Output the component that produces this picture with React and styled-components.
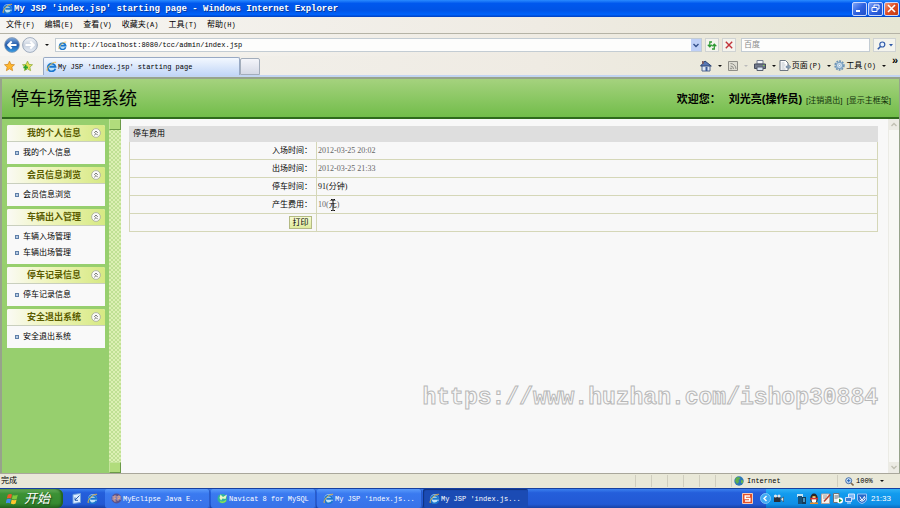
import styled, { createGlobalStyle, css } from 'styled-components';

const GlobalStyle = createGlobalStyle`
  *, *::before {
    box-sizing: border-box;
  }
  body {
    margin: 0;
    background: #ece9d8;
    color: #000;
    font-family: "Liberation Sans", "Noto Sans CJK SC", sans-serif;
    font-size: 8px;
    line-height: 12px;
  }
  button, input {
    font: inherit;
    color: inherit;
    margin: 0;
    padding: 0;
    border: 0;
    background: none;
  }
  svg {
    display: block;
    flex: none;
  }
`;

const mono = css`
  font-family: "Liberation Mono", "Noto Sans CJK SC", monospace;
  font-size: 7px;
`;

const Window = styled.div`
  display: flex;
  flex-direction: column;
  min-height: 100vh;
`;

/* ---- browser chrome ---- */

const TitleBar = styled.header`
  display: flex;
  align-items: center;
  gap: 1px;
  height: 17px;
  padding: 0 1px 0 2px;
  background: linear-gradient(#2a8bff, #0058ee 20%, #0054e6 60%, #0062fa 85%, #0040c0);
`;

const WindowTitle = styled.h1`
  flex: 1;
  margin: 0;
  color: #fff;
  font-family: "Liberation Mono", monospace;
  font-size: 9px;
  font-weight: bold;
  line-height: 16px;
  text-shadow: 1px 1px 0 #0a3a9c;
`;

const WindowButton = styled.button`
  display: flex;
  align-items: center;
  justify-content: center;
  width: 15px;
  height: 14px;
  border: 1px solid #c8d8ff;
  border-radius: 2px;
  background: ${(p) => (p.$close
    ? 'linear-gradient(135deg, #f09a7c, #dd4a22 50%, #c03a14)'
    : 'linear-gradient(135deg, #7fa5f8, #2f62e0 50%, #1f4fc8)')};
`;

const MenuBar = styled.nav`
  display: flex;
  align-items: center;
  gap: 10px;
  height: 17px;
  padding: 0 6px;
  background: linear-gradient(90deg, #f6f5f2, #efebe3 60%, #e6e6d4);
  border-bottom: 1px solid #b5b3a6;
`;

const MenuItem = styled.button`
  display: flex;
  white-space: nowrap;
`;

const HotKey = styled.span`
  ${mono}
`;

const AddressRow = styled.div`
  display: flex;
  align-items: center;
  gap: 3px;
  height: 22px;
  padding: 0 4px;
  background: linear-gradient(90deg, #f6f5f2, #efebe3 60%, #e6e6d4);
`;

const NavButtons = styled.div`
  display: flex;
  align-items: center;
  gap: 2px;
  width: 48px;
`;

const Field = styled.div`
  display: flex;
  align-items: center;
  gap: 3px;
  height: 14px;
  border: 1px solid #c3ccd3;
  background: #fdfdfc;
  ${(p) => (p.$grow ? 'flex: 1; padding-left: 2px;' : 'width: 129px; padding-left: 2px; margin-left: 2px;')}
`;

const FieldInput = styled.input`
  flex: 1;
  min-width: 0;
  height: 12px;
  outline: 0;
  ${(p) => p.$mono && mono}
  &::placeholder {
    color: #8c8c8c;
    opacity: 1;
  }
`;

const DropButton = styled.button`
  display: flex;
  align-items: center;
  justify-content: center;
  width: 10px;
  height: 12px;
  background: #bfd0f7;
`;

const SquareButton = styled.button`
  display: flex;
  align-items: center;
  justify-content: center;
  gap: 3px;
  width: ${(p) => (p.$wide ? '23px' : '14px')};
  height: 14px;
  border: 1px solid #cfd3d3;
  background: #f4f4ee;
`;

const TabRow = styled.div`
  display: flex;
  align-items: flex-end;
  height: 21px;
  background: linear-gradient(90deg, #f3f2ee, #efebe3 60%, #e6e6d4);
  border-bottom: 2px solid #c3d5f2;
`;

const Favorites = styled.div`
  display: flex;
  align-items: center;
  gap: 7px;
  width: 43px;
  height: 19px;
  padding-left: 4px;
`;

const PageTab = styled.button`
  display: flex;
  align-items: center;
  gap: 1px;
  width: 197px;
  height: 18px;
  padding-left: 2px;
  border: 1px solid #98a9c4;
  border-bottom: 0;
  border-radius: 2px 2px 0 0;
  background: linear-gradient(#f3f8ff, #c3d7f7);
  white-space: nowrap;
  ${mono}
`;

const NewTab = styled.button`
  width: 20px;
  height: 17px;
  border: 1px solid #a3adbb;
  border-radius: 2px 2px 0 0;
  background: linear-gradient(#f4f5fa, #d5d9e6);
`;

const CommandBar = styled.div`
  display: flex;
  align-items: center;
  height: 19px;
  margin-left: auto;
  padding-right: 2px;
`;

const Command = styled.button`
  display: flex;
  align-items: center;
  gap: 1px;
  margin-right: ${(p) => (p.$tight ? '3px' : '6px')};
  white-space: nowrap;
`;

const Arrow = styled.span`
  width: 0;
  height: 0;
  margin-left: 5px;
  border: 2px solid transparent;
  border-top-color: ${(p) => (p.$dim ? '#bbb' : '#111')};
  border-bottom: 0;
`;

const More = styled.button`
  align-self: flex-start;
  font-size: 11px;
  font-weight: bold;
  line-height: 8px;
`;

/* ---- page ---- */

const Page = styled.div`
  display: flex;
  flex: 1;
  flex-direction: column;
  border: solid #97a38b;
  border-width: 2px 1px 0 2px;
`;

const Banner = styled.header`
  display: flex;
  align-items: center;
  justify-content: space-between;
  height: 40px;
  padding: 2px 8px 0 9px;
  background: linear-gradient(#a5d27e, #72bd4a);
  border-bottom: 2px solid #2f6a1c;
`;

const SystemName = styled.h2`
  margin: 0;
  font-size: 18px;
  font-weight: normal;
  line-height: 24px;
`;

const Welcome = styled.div`
  display: flex;
  align-items: baseline;
  gap: 4px;
`;

const Greeting = styled.strong`
  margin-right: ${(p) => (p.$gap ? '4px' : '0')};
  font-size: 11px;
  line-height: 16px;
`;

const BannerLink = styled.a`
  color: #10300a;
  text-decoration: none;
`;

const Content = styled.div`
  display: flex;
  flex: 1;
`;

const Sidebar = styled.aside`
  display: flex;
  flex-direction: column;
  gap: 3px;
  width: 107px;
  padding: 6px 4px 5px 5px;
  background: #97cf6e;
`;

const Panel = styled.section`
  background: #f9f9f9;
  border-radius: 2px 2px 0 0;
  overflow: hidden;
`;

const PanelHead = styled.button`
  display: grid;
  grid-template-columns: 1fr 14px;
  align-items: center;
  width: 100%;
  height: 17px;
  padding-left: 20px;
  border-bottom: 1px solid #c9cfbe;
  background: linear-gradient(90deg, #fafaf5, #eef4b8 45%, #d6e983);
  color: #5a5c00;
  font-size: 9px;
  font-weight: bold;
  text-align: left;
`;

const PanelList = styled.ul`
  margin: 0;
  padding: 3px 0;
  list-style: none;
`;

const PanelItem = styled.li`
  display: flex;
  align-items: center;
  gap: 4px;
  height: 16px;
  padding-left: 8px;
  &::before {
    content: "";
    width: 4px;
    height: 4px;
    border: 1px solid #5f7fa8;
    background: #b9cce4;
  }
  a {
    color: #000;
    text-decoration: none;
  }
`;

const Splitter = styled.div`
  display: flex;
  flex-direction: column;
  justify-content: space-between;
  width: 12px;
  background: repeating-conic-gradient(#bfe094 0 25%, #dcf0b4 0 50%) 0 0 / 4px 4px;
`;

const SplitterKnob = styled.button`
  width: 12px;
  height: 11px;
  border: 1px solid;
  border-color: #c4e49a #6b9a48 #6b9a48 #c4e49a;
  background: #b1dc7c;
`;

const Main = styled.main`
  position: relative;
  flex: 1;
  padding: 7px 10px 0 8px;
  background: #f8f8f8;
`;

const FeeTable = styled.table`
  width: 100%;
  border-collapse: collapse;
  table-layout: fixed;
  line-height: 12px;

  th, td {
    height: 18px;
    padding: 0 1px;
    border: 1px solid #d5d7b8;
    text-align: left;
    font-weight: normal;
  }
  thead th {
    height: 15px;
    padding-left: 3px;
    background: #dedede;
    border-color: #dedede;
  }
  tbody th {
    padding-right: 4px;
    text-align: right;
  }
`;

const LabelCol = styled.col`
  width: 25%;
`;

const Value = styled.span`
  color: ${(p) => (p.$dark ? '#111' : '#666')};
  font-family: "Liberation Serif", "Noto Sans CJK SC", serif;
`;

const PrintButton = styled.button`
  width: 23px;
  height: 13px;
  border: 1px solid #b4ba84;
  background: linear-gradient(#f6fbd2, #dfeb9d);
  line-height: 11px;
  vertical-align: middle;
`;

const Unit = styled.span`
  position: relative;
  color: #111;
`;

const Caret = styled.svg`
  position: absolute;
  top: -1px;
  left: 1px;
`;

const Watermark = styled.div`
  position: absolute;
  right: 10px;
  bottom: 61px;
  color: #f8f8f8;
  font-family: "Liberation Mono", monospace;
  font-size: 23px;
  font-weight: bold;
  line-height: 28px;
  -webkit-text-stroke: 1px #b8b8b8;
`;

const ScrollTrack = styled.div`
  display: flex;
  flex-direction: column;
  justify-content: space-between;
  width: 11px;
  border-left: 1px solid #ebebe5;
  background: #f8f8f5;
`;

const ScrollButton = styled.button`
  display: flex;
  align-items: center;
  justify-content: center;
  width: 10px;
  height: 11px;
  background: #ecebe4;
`;

/* ---- status bar and taskbar ---- */

const StatusBar = styled.footer`
  display: flex;
  align-items: center;
  height: 15px;
  border-top: 1px solid #a9a79b;
  background: #e9e8d8;
`;

const StatusText = styled.span`
  flex: 1;
  padding-left: 1px;
`;

const StatusCell = styled.span`
  display: flex;
  align-items: center;
  gap: 3px;
  width: ${(p) => p.$width};
  height: 12px;
  padding-left: ${(p) => (p.$padded ? '2px' : '0')};
  border-left: 1px solid #d0cebf;
  ${mono}
`;

const ZoomButton = styled.button`
  display: flex;
  align-items: center;
  gap: 2px;
  padding-left: 5px;
  ${mono}
`;

const TaskBar = styled.footer`
  display: flex;
  align-items: stretch;
  height: 20px;
  border-top: 1px solid #1740a0;
  background: linear-gradient(#3a80ee, #245edb 20%, #2259d4 80%, #1941a5);
`;

const StartButton = styled.button`
  display: flex;
  align-items: center;
  gap: 5px;
  width: 63px;
  padding-left: 6px;
  border-radius: 0 6px 6px 0;
  background: linear-gradient(#67ad5c, #3c9135 25%, #358a30 75%, #23641f);
  box-shadow: inset -2px 0 2px #22601e;
  color: #fff;
  font-size: 13px;
  font-style: italic;
  text-shadow: 1px 1px 1px #1c4a18;
`;

const QuickLaunch = styled.div`
  display: flex;
  align-items: center;
  gap: 5px;
  width: 42px;
  padding-left: 9px;
`;

const Tasks = styled.div`
  display: flex;
  flex: 1;
  gap: 1px;
`;

const TaskButton = styled.button`
  display: flex;
  align-items: center;
  gap: 1px;
  width: 105px;
  padding-left: 6px;
  border-radius: 2px;
  background: ${(p) => (p.$active ? '#1b4bb4' : 'linear-gradient(#5a9bfa, #3a7af0 25%, #3872e8)')};
  box-shadow: ${(p) => (p.$active ? 'inset 1px 1px 1px #10327e' : 'inset -1px 0 0 #2a5cc8')};
  color: #fff;
  white-space: nowrap;
  ${mono}
`;

const InputMethod = styled.div`
  display: flex;
  align-items: center;
  width: 24px;
`;

const Tray = styled.div`
  display: flex;
  align-items: center;
  gap: 2px;
  width: 134px;
  background: linear-gradient(#2fb0f5, #129bee 25%, #0f8fe6 80%, #0c6cc0);
  color: #fff;
`;

const HideIcons = styled.button`
  margin-left: -6px;
`;

const TrayGroup = styled.div`
  display: flex;
  gap: 2px;
  margin-left: 11px;
`;

const Clock = styled.time`
  margin-left: auto;
  padding-right: 9px;
`;

/* ---- icons ---- */

function IeIcon({ size = 11 }) {
  return (
    <svg width={size} height={size} viewBox="0 0 12 12" fill="none">
      <circle cx="6" cy="6.4" r="5" fill="#bfe2f8" />
      <path d="M10.2 8.4A4.2 4.2 0 1 1 10.3 6.3H3.6" stroke="#1c78cf" strokeWidth="2" />
      <path d="M1.4 11C-.2 8.3 6 .8 11 1.4" stroke="#f0b73c" strokeWidth="1" />
    </svg>
  );
}

function NavCircle({ forward }) {
  const id = forward ? 'fwd' : 'back';
  return (
    <svg width="16" height="16" viewBox="0 0 16 16">
      <defs>
        <linearGradient id={id} x1="0" y1="0" x2="0" y2="1">
          <stop offset="0" stopColor={forward ? '#f6f8fb' : '#7fa9dc'} />
          <stop offset=".5" stopColor={forward ? '#c9d2df' : '#1f57a8'} />
          <stop offset="1" stopColor={forward ? '#e8eef6' : '#3aa0e8'} />
        </linearGradient>
      </defs>
      <circle cx="8" cy="8" r="7.4" fill={`url(#${id})`} stroke="#8c9bb0" strokeWidth=".8" />
      <path
        d={forward ? 'M3.5 8h8M8.3 4.5 11.8 8l-3.5 3.5' : 'M12.5 8h-8M7.7 4.5 4.2 8l3.5 3.5'}
        fill="none"
        stroke="#fff"
        strokeWidth="2"
      />
    </svg>
  );
}

function StarIcon({ add }) {
  return (
    <svg width="11" height="12" viewBox="0 0 12 12">
      <path
        d="M6 .6 7.6 4.2l3.9.4-2.9 2.6.8 3.9L6 9.1l-3.4 2 .8-3.9L.5 4.6l3.9-.4z"
        fill={add ? '#e6dc55' : '#ffb62b'}
        stroke={add ? '#7fa62c' : '#c97f18'}
        strokeWidth=".7"
      />
      {add && <path d="M4 5v5M1.5 7.5h5" stroke="#29a32b" strokeWidth="1.8" />}
    </svg>
  );
}

function HomeIcon() {
  return (
    <svg width="12" height="12" viewBox="0 0 12 12">
      <path d="M2 5.5h8V11H2z" fill="#dfe8f6" stroke="#50648c" />
      <path d="M.5 6 5 1l6.3 5z" fill="#5977b5" stroke="#2c4474" />
      <path d="M2 1h1.8v3H2z" fill="#7c5b62" />
      <path d="M5.5 7h2v4h-2z" fill="#3c5c9a" />
    </svg>
  );
}

function FeedIcon() {
  return (
    <svg width="10" height="10" viewBox="0 0 10 10" fill="none" stroke="#8f8f88">
      <path d="M.5.5h9v9h-9z" fill="#deddd3" />
      <path d="M2.5 5a3 3 0 0 1 3 3M2.5 2.5A5.5 5.5 0 0 1 8 8" />
      <circle cx="3" cy="7.5" r=".6" />
    </svg>
  );
}

function PrinterIcon() {
  return (
    <svg width="12" height="11" viewBox="0 0 12 11">
      <path d="M3 .5h6V4H3z" fill="#f5f7fb" stroke="#7a8292" />
      <path d="M.5 4h11v4.5H.5z" fill="#70798c" stroke="#454c5c" />
      <path d="M3 7h6v3.5H3z" fill="#d8e4f4" stroke="#59616f" />
      <path d="M9 5h1.5v1H9z" fill="#83d44b" />
    </svg>
  );
}

function PageIcon() {
  return (
    <svg width="12" height="11" viewBox="0 0 12 11">
      <path d="M1 .5h5.5L9 3v7.5H1z" fill="#fff" stroke="#6d7682" />
      <path d="M2.5 3h3M2.5 5h4M2.5 7h3M2.5 9h4" stroke="#9aa4b0" strokeWidth=".7" />
      <path d="M7 6h2.5V4.5L12 7 9.500 9V7.800H7z" fill="#8fa3b8" stroke="#59718e" strokeWidth=".4" />
    </svg>
  );
}

function GearIcon() {
  return (
    <svg width="11" height="11" viewBox="0 0 12 12" fill="none">
      <circle cx="6" cy="6" r="4.8" stroke="#6d93b5" strokeWidth="1.8" strokeDasharray="2 1.1" />
      <circle cx="6" cy="6" r="3.4" fill="#d9e9f5" stroke="#7fa4c4" strokeWidth="1.4" />
      <circle cx="6" cy="6" r="1.2" fill="#fff" stroke="#6d93b5" strokeWidth=".6" />
    </svg>
  );
}

function ChevronIcon({ up, color = '#34508c' }) {
  return (
    <svg width="6" height="5" viewBox="0 0 6 5">
      <path d={up ? 'M.5 4 3 1.5 5.5 4' : 'M.5 1 3 3.5 5.5 1'} fill="none" stroke={color} strokeWidth="1.4" />
    </svg>
  );
}

function CollapseIcon() {
  return (
    <svg width="10" height="10" viewBox="0 0 10 10">
      <circle cx="5" cy="5" r="4.4" fill="#fbfbf8" stroke="#a4a99a" strokeWidth=".8" />
      <path d="M3.3 4.8 5 3.1l1.7 1.7M3.3 7.2 5 5.5l1.7 1.7" fill="none" stroke="#444" strokeWidth=".8" />
    </svg>
  );
}

function MagnifierIcon({ plus }) {
  return (
    <svg width="9" height="9" viewBox="0 0 9 9" fill="none">
      {plus ? (
        <>
          <circle cx="3.7" cy="3.7" r="3" fill="#d5e7fa" stroke="#426ca8" />
          <path d="M3.7 2v3.4M2 3.7h3.4" stroke="#2464b8" />
          <path d="m6 6 2.5 2.5" stroke="#806a4e" strokeWidth="1.6" />
        </>
      ) : (
        <>
          <circle cx="5.3" cy="3.5" r="2.5" fill="#e8f2ff" stroke="#2f5aa8" strokeWidth="1.2" />
          <path d="M3.5 5.5.8 8.2" stroke="#2f5aa8" strokeWidth="1.6" />
        </>
      )}
    </svg>
  );
}

function RefreshIcon() {
  return (
    <svg width="10" height="9" viewBox="0 0 10 9" fill="none" stroke="#2f9a35" strokeWidth="1.3">
      <path d="M5 1H2.800v4.500M.8 3.800l2 2 2-2" />
      <path d="M5 8h2.300V3.500M5.300 5.200l2-2 2 2" />
    </svg>
  );
}

function GlobeIcon() {
  return (
    <svg width="10" height="10" viewBox="0 0 10 10">
      <circle cx="5" cy="5" r="4.7" fill="#2c78b8" />
      <path d="M2 1.6 5 1l1.5 1.5-2 1.5L5 6 3 8 1 5z" fill="#5fae4c" />
      <path d="m7 4 2.4.6-.8 2.8L7 7z" fill="#67b552" />
    </svg>
  );
}

function WindowsFlag() {
  return (
    <svg width="13" height="12" viewBox="0 0 13 12">
      <path d="M1.8 1.8Q4 .4 6 1.6L5.1 5.4Q3 4.4.8 5.6z" fill="#f0592a" />
      <path d="M6.8 2Q9 3.2 11.8 1.8L10.8 5.8Q8.4 7 5.9 5.8z" fill="#7fcb3b" />
      <path d="M.6 6.5Q2.8 5.2 4.9 6.3L4 10.2Q2 9.2-.3 10.3z" fill="#3f8cf0" />
      <path d="M5.7 6.6Q8 7.9 10.6 6.6L9.6 10.5Q7.4 11.8 4.8 10.5z" fill="#ffc72e" />
    </svg>
  );
}

function DesktopIcon() {
  return (
    <svg width="10" height="11" viewBox="0 0 10 11">
      <path d="M1 1.5 8.5.5v9L1 10.5z" fill="#dcecff" stroke="#6fa0dd" />
      <path d="m3 7 4.5-4.5M3 4.5V7.3h3" stroke="#2a5fae" fill="none" />
    </svg>
  );
}

function EclipseIcon() {
  return (
    <svg width="11" height="11" viewBox="0 0 11 11">
      <circle cx="5.5" cy="5.5" r="5" fill="#59538e" />
      <path d="M1 4h9M.8 6h9.4" stroke="#c3bbe0" strokeWidth=".8" />
      <path d="M3 3v5M3 3h2.3M3 5.3h2M3 8h2.3M7 8V3h1.7v2.5H7" stroke="#e3a98f" fill="none" strokeWidth=".9" />
    </svg>
  );
}

function NavicatIcon() {
  return (
    <svg width="11" height="11" viewBox="0 0 11 11">
      <circle cx="5.3" cy="5.7" r="4.8" fill="#32b49c" />
      <path d="M3.500 1.500 6 4 10 1.500 8.500 6 5.500 5.500 4 7.500 2.500 5z" fill="#e6f8c6" />
      <path d="M3 8.5Q6 10.5 9 7.5" stroke="#8fe254" strokeWidth="1.4" fill="none" />
    </svg>
  );
}

function TrayIcons() {
  return (
    <TrayGroup>
      <svg width="10" height="11" viewBox="0 0 10 11">
        <path d="M0 1h6v3H0z" fill="#c2e4f4" />
        <path d="M1 3h4v8H1z" fill="#175078" />
        <path d="M5 4h4v7H5z" fill="#173c58" />
        <path d="M6 5h2v4H6z" fill="#4a96c0" />
      </svg>
      <svg width="10" height="11" viewBox="0 0 10 11">
        <ellipse cx="5" cy="5.5" rx="3.7" ry="5" fill="#29252a" />
        <ellipse cx="5" cy="7" rx="2.4" ry="3" fill="#fff" />
        <path d="M1.2 4.8h7.6v1.6H1.2z" fill="#d8342b" />
        <path d="M3.5 3h3v1.3h-3z" fill="#f2b233" />
        <path d="M1 9.5h8V11H1z" fill="#e98f2c" />
      </svg>
      <svg width="10" height="11" viewBox="0 0 10 11">
        <path d="M.5 1h8v9.5h-8z" fill="#f6f3ee" stroke="#b9a9a0" />
        <path d="M2 3h4M2 5h3" stroke="#999" />
        <path d="M3 8.5 9.3 1.5" stroke="#b8402e" strokeWidth="1.5" />
      </svg>
      <svg width="10" height="11" viewBox="0 0 10 11">
        <path d="M.5.5H6v9H.5z" fill="#eef1f2" stroke="#6d7478" />
        <path d="M1.5 3H5M1.5 5H5" stroke="#6d7478" />
        <circle cx="7" cy="7.5" r="3" fill="#fff" />
        <path d="M6 5.5 9 7.5 6 9.5z" fill="#229a2c" />
      </svg>
      <svg width="10" height="11" viewBox="0 0 10 11">
        <path d="M3.5 1h6v5h-6z" fill="#7bb7f5" stroke="#dbeaff" />
        <path d="M.5 4.5h6v4h-6z" fill="#3c79d0" stroke="#cfe1fb" />
        <path d="M2 10h4" stroke="#dbeaff" />
      </svg>
      <svg width="10" height="11" viewBox="0 0 10 11">
        <path d="M.5 1h9v6q-1.5 3-4.5 3.5Q2 10 .5 7z" fill="#2768c8" stroke="#9cc7f8" />
        <path d="M2.8 3.5 5 7.5l2.4-4A2.6 2.6 0 1 1 2.8 7" fill="none" stroke="#fff" />
      </svg>
    </TrayGroup>
  );
}

const menus = [
  ['文件', '(F)'],
  ['编辑', '(E)'],
  ['查看', '(V)'],
  ['收藏夹', '(A)'],
  ['工具', '(T)'],
  ['帮助', '(H)'],
];

const panels = [
  { title: '我的个人信息', items: ['我的个人信息'] },
  { title: '会员信息浏览', items: ['会员信息浏览'] },
  { title: '车辆出入管理', items: ['车辆入场管理', '车辆出场管理'] },
  { title: '停车记录信息', items: ['停车记录信息'] },
  { title: '安全退出系统', items: ['安全退出系统'] },
];

const tasks = [
  { label: 'MyEclipse Java E...', icon: <EclipseIcon /> },
  { label: 'Navicat 8 for MySQL', icon: <NavicatIcon /> },
  { label: "My JSP 'index.js...", icon: <IeIcon /> },
  { label: "My JSP 'index.js...", icon: <IeIcon />, active: true },
];

function BrowserChrome() {
  return (
    <>
      <TitleBar>
        <IeIcon />
        <WindowTitle>My JSP 'index.jsp' starting page - Windows Internet Explorer</WindowTitle>
        <WindowButton aria-label="最小化">
          <svg width="9" height="9" viewBox="0 0 9 9"><path d="M1 7h4" stroke="#fff" strokeWidth="2" /></svg>
        </WindowButton>
        <WindowButton aria-label="还原">
          <svg width="9" height="9" viewBox="0 0 9 9" fill="none" stroke="#fff">
            <path d="M3 3V1h5v4H6M1 3.5h5v4H1z" />
          </svg>
        </WindowButton>
        <WindowButton $close aria-label="关闭">
          <svg width="9" height="9" viewBox="0 0 9 9"><path d="m1 1 7 7M8 1 1 8" stroke="#fff" strokeWidth="1.6" /></svg>
        </WindowButton>
      </TitleBar>

      <MenuBar>
        {menus.map(([name, key]) => (
          <MenuItem key={name}>{name}<HotKey>{key}</HotKey></MenuItem>
        ))}
      </MenuBar>

      <AddressRow>
        <NavButtons>
          <button aria-label="后退"><NavCircle /></button>
          <button aria-label="前进"><NavCircle forward /></button>
          <Arrow />
        </NavButtons>
        <Field $grow>
          <IeIcon size={9} />
          <FieldInput $mono aria-label="地址" defaultValue="http://localhost:8080/tcc/admin/index.jsp" />
          <DropButton aria-label="地址列表"><ChevronIcon /></DropButton>
        </Field>
        <SquareButton aria-label="刷新"><RefreshIcon /></SquareButton>
        <SquareButton aria-label="停止">
          <svg width="8" height="8" viewBox="0 0 8 8"><path d="m.8.8 6.4 6.4M7.2.8.8 7.2" stroke="#c2333a" strokeWidth="1.4" /></svg>
        </SquareButton>
        <Field>
          <FieldInput aria-label="搜索" placeholder="百度" />
        </Field>
        <SquareButton $wide aria-label="开始搜索">
          <MagnifierIcon />
          <svg width="4" height="3" viewBox="0 0 4 3"><path d="M0 0h4L2 2.5z" fill="#2f5aa8" /></svg>
        </SquareButton>
      </AddressRow>

      <TabRow>
        <Favorites>
          <button aria-label="收藏中心"><StarIcon /></button>
          <button aria-label="添加到收藏夹"><StarIcon add /></button>
        </Favorites>
        <PageTab><IeIcon />My JSP 'index.jsp' starting page</PageTab>
        <NewTab aria-label="新选项卡" />
        <CommandBar>
          <Command aria-label="主页"><HomeIcon /><Arrow /></Command>
          <Command aria-label="源"><FeedIcon /><Arrow $dim /></Command>
          <Command $tight aria-label="打印页面"><PrinterIcon /><Arrow /></Command>
          <Command $tight><PageIcon />页面<HotKey>(P)</HotKey><Arrow /></Command>
          <Command><GearIcon />工具<HotKey>(O)</HotKey><Arrow /></Command>
          <More aria-label="更多">»</More>
        </CommandBar>
      </TabRow>
    </>
  );
}

function FeeDetails() {
  return (
    <FeeTable>
      <colgroup>
        <LabelCol />
        <col />
      </colgroup>
      <thead>
        <tr><th colSpan="2">停车费用</th></tr>
      </thead>
      <tbody>
        <tr><th scope="row">入场时间：</th><td><Value>2012-03-25 20:02</Value></td></tr>
        <tr><th scope="row">出场时间：</th><td><Value>2012-03-25 21:33</Value></td></tr>
        <tr><th scope="row">停车时间：</th><td><Value $dark>91(分钟)</Value></td></tr>
        <tr>
          <th scope="row">产生费用：</th>
          <td>
            <Value>
              10(
              <Unit>
                元
                <Caret width="6" height="12" viewBox="0 0 6 12">
                  <path d="M1 .5h1.5L3 1l.5-.5H5M3 1v10M1 11.5h1.5L3 11l.5.5H5" fill="none" stroke="#111" />
                </Caret>
              </Unit>
              )
            </Value>
          </td>
        </tr>
        <tr><th><PrintButton>打印</PrintButton></th><td /></tr>
      </tbody>
    </FeeTable>
  );
}

function App() {
  return (
    <Window>
      <GlobalStyle />
      <BrowserChrome />

      <Page>
        <Banner>
          <SystemName>停车场管理系统</SystemName>
          <Welcome>
            <Greeting $gap>欢迎您：</Greeting>
            <Greeting>刘光亮(操作员)</Greeting>
            <BannerLink href="#logout">[注销退出]</BannerLink>
            <BannerLink href="#frame">[显示主框架]</BannerLink>
          </Welcome>
        </Banner>
        <Content>
          <Sidebar>
            {panels.map((panel) => (
              <Panel key={panel.title}>
                <PanelHead>{panel.title}<CollapseIcon /></PanelHead>
                <PanelList>
                  {panel.items.map((item) => (
                    <PanelItem key={item}><a href="#page">{item}</a></PanelItem>
                  ))}
                </PanelList>
              </Panel>
            ))}
          </Sidebar>
          <Splitter>
            <SplitterKnob aria-label="向上" />
            <SplitterKnob aria-label="向下" />
          </Splitter>
          <Main>
            <FeeDetails />
            <Watermark>https://www.huzhan.com/ishop30884</Watermark>
          </Main>
          <ScrollTrack>
            <ScrollButton aria-label="向上滚动"><ChevronIcon up color="#c0bfb2" /></ScrollButton>
            <ScrollButton aria-label="向下滚动"><ChevronIcon color="#c0bfb2" /></ScrollButton>
          </ScrollTrack>
        </Content>
      </Page>

      <StatusBar>
        <StatusText>完成</StatusText>
        {[1, 2, 3, 4, 5, 6].map((n) => <StatusCell key={n} $width="16px" />)}
        <StatusCell $padded $width="106px"><GlobeIcon />Internet</StatusCell>
        <StatusCell $padded $width="63px">
          <ZoomButton><MagnifierIcon plus />100%<Arrow /></ZoomButton>
        </StatusCell>
      </StatusBar>

      <TaskBar>
        <StartButton><WindowsFlag />开始</StartButton>
        <QuickLaunch>
          <button aria-label="显示桌面"><DesktopIcon /></button>
          <button aria-label="浏览器"><IeIcon /></button>
        </QuickLaunch>
        <Tasks>
          {tasks.map((task, i) => (
            <TaskButton key={i} $active={task.active}>{task.icon}{task.label}</TaskButton>
          ))}
        </Tasks>
        <InputMethod>
          <svg width="11" height="11" viewBox="0 0 11 11">
            <path d="M.5.5h10v10H.5z" fill="#e4502a" stroke="#f7c9b5" />
            <path d="M8 3H3.2v2.5h4.6V8H3" fill="none" stroke="#fff" strokeWidth="1.5" />
          </svg>
        </InputMethod>
        <Tray>
          <HideIcons aria-label="隐藏图标">
            <svg width="11" height="11" viewBox="0 0 11 11">
              <circle cx="5.5" cy="5.5" r="5" fill="#3fa9f2" stroke="#8fd0fb" strokeWidth=".8" />
              <path d="M6.5 3 4 5.5 6.5 8" fill="none" stroke="#fff" strokeWidth="1.4" />
            </svg>
          </HideIcons>
          <svg width="11" height="9" viewBox="0 0 11 9">
            <path d="M1 3h6.5v5H1z" fill="#2a2f38" />
            <circle cx="2.5" cy="2" r="1.6" fill="#dfe5ea" />
            <circle cx="6" cy="2" r="1.6" fill="#dfe5ea" />
            <path d="M7.5 5 10.5 3v5z" fill="#e8edf0" stroke="#333" strokeWidth=".5" />
          </svg>
          <TrayIcons />
          <Clock>21:33</Clock>
        </Tray>
      </TaskBar>
    </Window>
  );
}

export default App;
